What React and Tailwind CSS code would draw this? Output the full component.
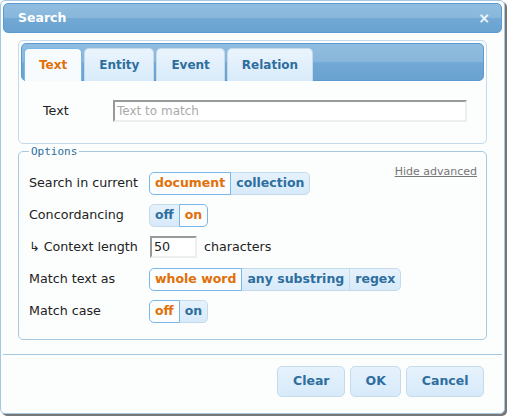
import React from "react";

const gloss =
  "bg-[linear-gradient(to_bottom,#90bde0_0%,#88b7db_48%,#71a8d4_52%,#6aa2d0_100%)]";

function ButtonSet({ items, active }) {
  return (
    <div className="flex h-[23px]">
      {items.map((it, i) => {
        const on = i === active;
        const first = i === 0;
        const last = i === items.length - 1;
        return (
          <div
            key={it}
            className={
              "flex items-center px-[5px] font-bold text-[12.5px] border " +
              (first ? "rounded-l-[5px] " : "-ml-px ") +
              (last ? "rounded-r-[5px] " : "") +
              (on
                ? "relative z-10 bg-[#fbfdfe] border-[#79b7e7] text-[#e17009]"
                : "bg-[linear-gradient(to_bottom,#e6f2fc,#d7eafa)] border-[#c5dbec] text-[#2e6e9e]")
            }
          >
            {it}
          </div>
        );
      })}
    </div>
  );
}

function Row({ label, children }) {
  return (
    <div className="flex h-[32px] items-center">
      <div className="w-[120px] text-[12.7px] text-[#222]">{label}</div>
      {children}
    </div>
  );
}

export default function App() {
  const tabs = ["Text", "Entity", "Event", "Relation"];
  return (
    <div
      className="w-[507px] h-[416px] bg-white"
      style={{ fontFamily: "'DejaVu Sans', Verdana, sans-serif" }}
    >
      <div className="w-[505px] h-[414px] rounded-[5px] border border-[#a6c9e2] bg-[#fcfdfd] p-[2px] shadow-[2px_2px_0_#777] flex flex-col">
        {/* title bar */}
        <div
          className={
            "h-[30px] rounded-[5px] border border-[#5b9bd1] flex items-center justify-between pl-[14px] pr-[11px] " +
            gloss
          }
        >
          <span className="text-white font-bold text-[12.5px]">Search</span>
          <span className="text-[#eef5fb] font-bold text-[14px] leading-none">
            ×
          </span>
        </div>

        <div className="mx-[15px] mt-[7px]">
          {/* tabs */}
          <div className="h-[104px] rounded-[5px] border border-[#c5dbec] bg-[#fcfdfd] p-[2px]">
            <div
              className={
                "h-[38px] rounded-[5px] border border-[#5b9bd1] flex items-end gap-[2px] pl-[2px] " +
                gloss
              }
            >
              {tabs.map((t, i) => (
                <div
                  key={t}
                  className={
                    "h-[33px] -mb-px flex items-center px-[14px] rounded-t-[5px] border border-b-0 font-bold text-[12px] " +
                    (i === 0
                      ? "bg-[#f8fbfd] border-[#79b7e7] text-[#e17009]"
                      : "bg-[linear-gradient(to_bottom,#eaf4fd,#d9ebfa)] border-[#c5dbec] text-[#2e6e9e]")
                  }
                >
                  {t}
                </div>
              ))}
            </div>
            <div className="flex items-center mt-[19px] pl-[22px]">
              <span className="w-[70px] text-[12.7px] text-[#222]">Text</span>
              <div className="w-[354px] h-[22px] border-2 border-t-[#999] border-l-[#999] border-b-[#eee] border-r-[#eee] bg-white flex items-center pl-[2px] text-[12px] text-[#aaa]">
                Text to match
              </div>
            </div>
          </div>

          {/* options */}
          <fieldset className="relative mt-px rounded-[5px] border border-[#a6c9e2] px-[10px] pb-[12px]">
            <legend
              className="px-[2px] text-[11px] leading-[13px] text-[#2e6e9e]"
              style={{ fontFamily: "'DejaVu Sans Mono', monospace" }}
            >
              Options
            </legend>
            <span className="absolute right-[9px] top-[6px] text-[11px] text-[#777] underline">
              Hide advanced
            </span>
            <div className="pt-[9px]">
              <Row label="Search in current">
                <ButtonSet items={["document", "collection"]} active={0} />
              </Row>
              <Row label="Concordancing">
                <ButtonSet items={["off", "on"]} active={1} />
              </Row>
              <Row label="↳ Context length">
                <div className="ml-px w-[47px] h-[22px] border-2 border-t-[#999] border-l-[#999] border-b-[#eee] border-r-[#eee] bg-white flex items-center pl-[2px] text-[12.7px] text-[#222]">
                  50
                </div>
                <span className="ml-[7px] text-[12.7px] text-[#222]">characters</span>
              </Row>
              <Row label="Match text as">
                <ButtonSet items={["whole word", "any substring", "regex"]} active={0} />
              </Row>
              <Row label="Match case">
                <ButtonSet items={["off", "on"]} active={0} />
              </Row>
            </div>
          </fieldset>
        </div>

        {/* button pane */}
        <div className="mt-[14px] border-t border-[#a6c9e2] flex justify-end gap-[5px] pt-[11px] pr-[18px]">
          {["Clear", "OK", "Cancel"].map((b) => (
            <div
              key={b}
              className="h-[31px] flex items-center px-[14.5px] rounded-[5px] border border-[#c5dbec] bg-[linear-gradient(to_bottom,#e6f2fc,#d7eafa)] text-[#2e6e9e] font-bold text-[12.5px]"
            >
              {b}
            </div>
          ))}
        </div>
      </div>
    </div>
  );
}
